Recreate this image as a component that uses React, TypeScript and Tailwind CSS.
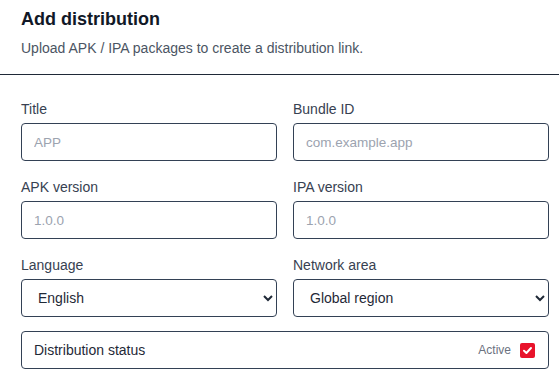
import React from "react";

function Field({ label, placeholder }: { label: string; placeholder: string }) {
  return (
    <div className="flex flex-col">
      <label className="text-sm leading-5 pt-0.5 mb-1 text-[#374151]">{label}</label>
      <input
        className="h-[38px] w-full rounded border border-[#334155] px-3 text-[13.5px] text-[#111827] placeholder:text-[#9ca3af] outline-none bg-white"
        placeholder={placeholder}
      />
    </div>
  );
}

function SelectField({ label, options }: { label: string; options: string[] }) {
  return (
    <div className="flex flex-col">
      <label className="text-sm leading-5 pt-0.5 mb-1 text-[#374151]">{label}</label>
      <select className="h-[38px] w-full rounded border border-[#334155] px-3 text-sm text-[#1f2937] bg-white outline-none">
        {options.map((o) => (
          <option key={o}>{o}</option>
        ))}
      </select>
    </div>
  );
}

export default function App() {
  return (
    <div className="w-[559px] h-[374px] bg-white overflow-hidden font-['Liberation_Sans',Arial,sans-serif]">
      <div className="px-[21px] pt-[8px] pb-[16px]">
        <h1 className="text-[18px] leading-[22px] font-bold text-[#111827]">Add distribution</h1>
        <p className="mt-[9px] text-sm leading-[19px] text-[#4b5563]">
          Upload APK / IPA packages to create a distribution link.
        </p>
      </div>
      <div className="border-b border-[#1f2937]" />
      <div className="w-[549px] pl-[21px] pt-[22px] grid grid-cols-2 gap-x-4 gap-y-[14px]">
        <Field label="Title" placeholder="APP" />
        <Field label="Bundle ID" placeholder="com.example.app" />
        <Field label="APK version" placeholder="1.0.0" />
        <Field label="IPA version" placeholder="1.0.0" />
        <SelectField label="Language" options={["English"]} />
        <SelectField label="Network area" options={["Global region"]} />
        <div className="col-span-2 h-[38px] rounded border border-[#334155] flex items-center justify-between pl-3 pr-[13px]">
          <span className="text-sm text-[#1f2937]">Distribution status</span>
          <div className="flex items-center gap-[9px]">
            <span className="text-xs text-[#6b7280]">Active</span>
            <span className="w-[15px] h-[15px] rounded-[2px] bg-[#e8132b] flex items-center justify-center">
              <svg width="11" height="11" viewBox="0 0 11 11" fill="none">
                <path d="M2 5.8 L4.4 8 L9 3" stroke="white" strokeWidth="2" strokeLinecap="round" strokeLinejoin="round" />
              </svg>
            </span>
          </div>
        </div>
      </div>
    </div>
  );
}
